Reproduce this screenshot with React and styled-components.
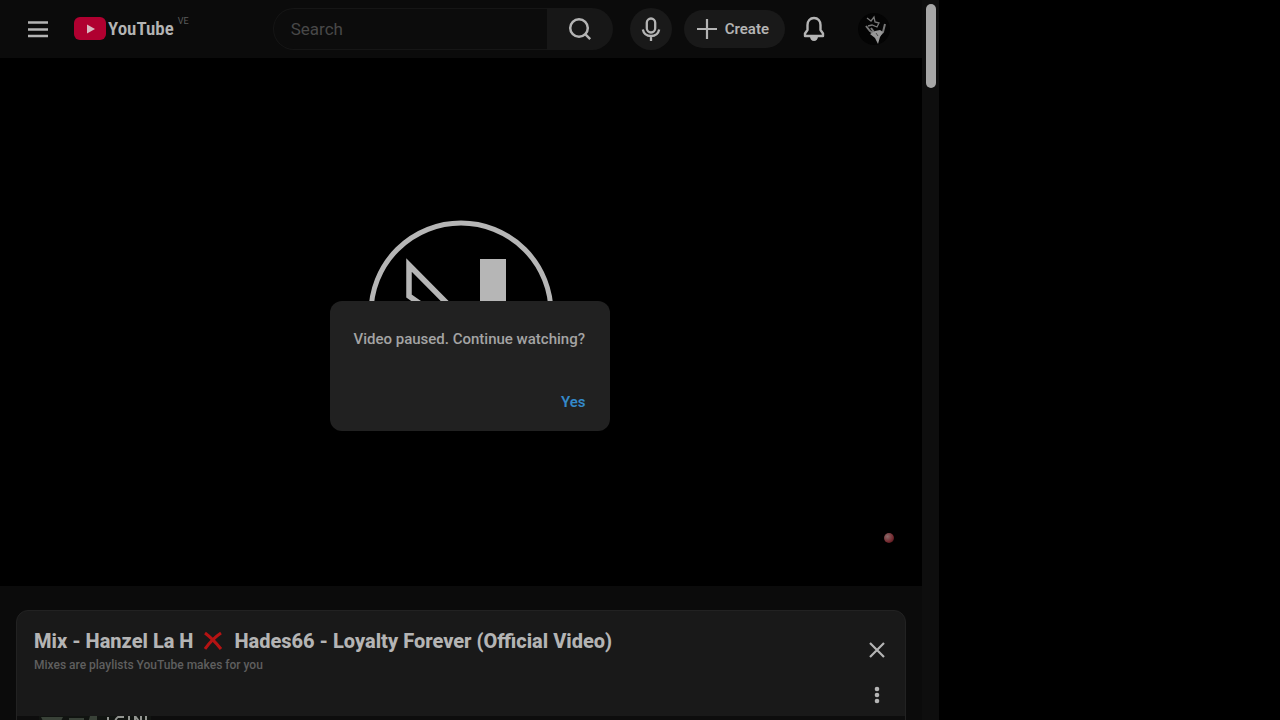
import React, { useState } from "react";
import styled, { createGlobalStyle } from "styled-components";

const GlobalStyle = createGlobalStyle`
  * {
    box-sizing: border-box;
  }

  body {
    margin: 0;
    background: #000;
    color: #b4b4b4;
    font-family: Roboto, "Liberation Sans", sans-serif;
  }

  button, input {
    font: inherit;
    color: inherit;
  }
`;

const Layout = styled.div`
  display: grid;
  grid-template-columns: minmax(0, 1fr) 341px;
  height: 100vh;
  overflow: hidden;
`;

const Browser = styled.div`
  position: relative;
  display: flex;
  min-width: 0;
  height: 100vh;
  background: #0b0b0b;
`;

const Page = styled.div`
  flex: 1;
  min-width: 0;
  height: 100vh;
  overflow: hidden;
`;

const ScrollTrack = styled.div`
  width: 17px;
  padding: 4px;
  background: #0e0e0e;
`;

const ScrollThumb = styled.div`
  width: 10px;
  height: 84px;
  border-radius: 5px;
  background: #a6a6a6;
`;

const Header = styled.header`
  display: flex;
  align-items: center;
  height: 58px;
  padding: 0 32px 0 18px;
`;

const IconButton = styled.button`
  display: flex;
  align-items: center;
  justify-content: center;
  flex: none;
  width: ${props => props.$size || 40}px;
  height: ${props => props.$size || 40}px;
  padding: 0;
  border: none;
  border-radius: 50%;
  background: ${props => (props.$filled ? "#191919" : "transparent")};
  cursor: pointer;
`;

const Logo = styled.a`
  display: flex;
  align-items: center;
  gap: 2px;
  margin-left: 16px;
  color: #b4b4b4;
  text-decoration: none;
`;

const LogoText = styled.span`
  font-family: "Roboto Condensed", "Open Sans Condensed", Roboto, sans-serif;
  font-size: 19px;
  font-weight: 600;
  line-height: 26px;
`;

const Country = styled.span`
  align-self: flex-start;
  margin-left: 2px;
  font-size: 9px;
  line-height: 10px;
  color: #5c5c5c;
`;

const SearchForm = styled.form`
  display: flex;
  flex: 1;
  height: 42px;
  max-width: 340px;
  margin: 0 17px 0 auto;
`;

const SearchInput = styled.input`
  flex: 1;
  min-width: 0;
  padding: 0 17px;
  border: 1px solid #161616;
  border-right: none;
  border-radius: 21px 0 0 21px;
  outline: none;
  background: #0c0c0c;
  font-size: 17px;

  &::placeholder {
    color: #484848;
    opacity: 1;
  }
`;

const SearchButton = styled.button`
  display: flex;
  align-items: center;
  justify-content: center;
  width: 66px;
  padding: 0;
  border: none;
  border-radius: 0 21px 21px 0;
  background: #171717;
  cursor: pointer;
`;

const CreateButton = styled.button`
  display: flex;
  align-items: center;
  gap: 8px;
  height: 38px;
  margin: 0 9px 0 12px;
  padding: 0 16px 0 13px;
  border: none;
  border-radius: 19px;
  background: #191919;
  font-size: 15px;
  font-weight: 600;
  cursor: pointer;
`;

const Avatar = styled.button`
  display: flex;
  flex: none;
  width: 32px;
  height: 32px;
  margin-left: 24px;
  padding: 0;
  border: none;
  border-radius: 50%;
  background: #040404;
  overflow: hidden;
  cursor: pointer;
`;

const Player = styled.section`
  position: relative;
  display: flex;
  justify-content: center;
  height: calc(100vh - 192px);
  padding-top: 162px;
  background: #000;
`;

const Watermark = styled.span`
  position: absolute;
  right: 28px;
  bottom: 43px;
  width: 10px;
  height: 10px;
  border-radius: 50%;
  background: radial-gradient(circle at 35% 35%, #8a6a6a, #74282e 60%, #2a080c);
`;

const Dialog = styled.div`
  position: absolute;
  top: calc(50% + 6px);
  left: 50%;
  display: flex;
  flex-direction: column;
  justify-content: space-between;
  width: 280px;
  height: 130px;
  padding: 28px 24px 19px;
  border-radius: 12px;
  background: #212121;
  transform: translate(-50%, -50%);
`;

const Message = styled.p`
  margin: 0;
  font-size: 15px;
  font-weight: 500;
  line-height: 20px;
  white-space: nowrap;
  color: #a4a4a4;
`;

const ConfirmButton = styled.button`
  align-self: flex-end;
  padding: 0;
  border: none;
  background: none;
  font-size: 15px;
  font-weight: 600;
  line-height: 20px;
  color: #3489c9;
  cursor: pointer;
`;

const Panel = styled.section`
  margin: 24px 16px 0;
  border: 1px solid #222;
  border-radius: 12px;
  background: #191919;
  overflow: hidden;
`;

const PanelHeader = styled.div`
  display: flex;
  justify-content: space-between;
  height: 105px;
  padding: 17px 8px 0 17px;
`;

const PanelTitle = styled.h2`
  display: flex;
  align-items: center;
  gap: 11px;
  margin: 0;
  font-size: 20px;
  font-weight: 800;
  line-height: 26px;
  white-space: nowrap;
`;

const PanelSubtitle = styled.p`
  margin: 3px 0 0;
  font-size: 12px;
  font-weight: 500;
  line-height: 16px;
  color: #5f5f5f;
`;

const PanelActions = styled.div`
  display: flex;
  flex-direction: column;
  gap: 5px;
  padding-top: 2px;
`;

const QueueRow = styled.div`
  height: 64px;
  padding-left: 22px;
  background: #0d0d0d;
`;

const MenuIcon = () => (
  <svg width="20" height="18" viewBox="0 0 20 18" stroke="#b4b4b4" strokeWidth="2.400">
    <path d="M0 2.500h20M0 9.500h20M0 16h20" />
  </svg>
);

const PlayLogo = () => (
  <svg width="32" height="24" viewBox="0 0 32 24">
    <rect x="0" y="0" width="32" height="23" rx="6" fill="#b00030" />
    <path d="M13 7.500v9l8-4.500z" fill="#d8b8bf" />
  </svg>
);

const SearchIcon = () => (
  <svg width="24" height="24" viewBox="0 0 24 24" fill="none" stroke="#b4b4b4" strokeWidth="2.500">
    <circle cx="11" cy="11" r="8.800" />
    <path d="M17.200 17.200l5 5" />
  </svg>
);

const MicIcon = () => (
  <svg width="20" height="24" viewBox="0 0 20 24" fill="none" stroke="#b4b4b4" strokeWidth="2.300">
    <rect x="5.800" y="1.500" width="8.400" height="14" rx="4.200" />
    <path d="M1.800 12.500c1 4.600 4.300 6.500 8.200 6.500s7.200-1.900 8.200-6.500M10 19v5" />
  </svg>
);

const PlusIcon = () => (
  <svg width="20" height="20" viewBox="0 0 20 20" stroke="#b4b4b4" strokeWidth="2.200">
    <path d="M10 0v20M0 10h20" />
  </svg>
);

const BellIcon = () => (
  <svg width="22" height="26" viewBox="0 0 22 26">
    <path
      d="M11 2c-4 0-6.500 3-6.500 7v5L2 17.500V20h18v-2.500L17.500 14V9c0-4-2.500-7-6.500-7z"
      fill="none"
      stroke="#b4b4b4"
      strokeWidth="2.400"
      strokeLinejoin="round"
    />
    <path d="M7 20.500h8c0 2.500-1.700 4.500-4 4.500s-4-2-4-4.500z" fill="#b4b4b4" />
  </svg>
);

const AvatarArt = () => (
  <svg width="32" height="32" viewBox="0 0 32 32" fill="none" stroke="#777">
    <path d="M9 5l4 3 3-4 1 5 4 1-2 4-5-2-4 1" strokeWidth="1.300" />
    <path d="M8 13l4 5 6 4M13 15l3 4M27 11l-2 8-5 5" strokeWidth="2" />
    <path d="M17 18l5-1 3 2-3 5-2 7-3-6-5-4z" fill="#989898" stroke="none" />
    <path d="M18 20l2 3" stroke="#484848" />
  </svg>
);

const VideoLogo = () => (
  <svg width="186" height="186" viewBox="0 0 186 186" fill="none" stroke="#b6b6b6">
    <circle cx="93" cy="93" r="90" strokeWidth="5" />
    <path d="M41 45v31l100 70L41 45z" strokeWidth="5.500" />
    <path d="M112 39h26v108l-26-24z" fill="#b6b6b6" stroke="none" />
  </svg>
);

const CrossMark = () => (
  <svg width="19" height="20" viewBox="0 0 19 20" stroke="#b51313" strokeWidth="3">
    <path d="M1 2q8 6 16 16M17 2q-9 6-16 16" fill="none" />
  </svg>
);

const CloseIcon = () => (
  <svg width="16" height="16" viewBox="0 0 16 16" stroke="#b4b4b4" strokeWidth="2.200">
    <path d="M1 1l14 14M15 1L1 15" />
  </svg>
);

const DotsIcon = () => (
  <svg width="6" height="18" viewBox="0 0 6 18" fill="#b4b4b4">
    <circle cx="3" cy="3" r="2.300" />
    <circle cx="3" cy="9" r="2.300" />
    <circle cx="3" cy="15" r="2.300" />
  </svg>
);

const QueueThumb = () => (
  <svg width="112" height="62" viewBox="0 0 112 62">
    <rect width="112" height="62" fill="#111411" />
    <path d="M2 1h22l-3 6H5zM30 2h15v5H30zM51 0h7v7h-9z" fill="#394238" />
    <path d="M69 1v7M85 1h-6q-3 2-3 6M90 0v8M96 8V0l6 8V0M107 0v8" fill="none" stroke="#929490" strokeWidth="2" />
  </svg>
);

const App = () => {
  const [paused, setPaused] = useState(true);
  const [query, setQuery] = useState("");

  return (
    <Layout>
      <GlobalStyle />
      <Browser>
        <Page>
          <Header>
            <IconButton aria-label="Guide">
              <MenuIcon />
            </IconButton>
            <Logo href="#" aria-label="YouTube Home">
              <PlayLogo />
              <LogoText>YouTube</LogoText>
              <Country>VE</Country>
            </Logo>
            <SearchForm onSubmit={e => e.preventDefault()}>
              <SearchInput
                aria-label="Search"
                placeholder="Search"
                value={query}
                onChange={e => setQuery(e.target.value)}
              />
              <SearchButton aria-label="Submit search">
                <SearchIcon />
              </SearchButton>
            </SearchForm>
            <IconButton $filled $size={42} aria-label="Search with your voice">
              <MicIcon />
            </IconButton>
            <CreateButton>
              <PlusIcon />
              Create
            </CreateButton>
            <IconButton aria-label="Notifications">
              <BellIcon />
            </IconButton>
            <Avatar aria-label="Account menu">
              <AvatarArt />
            </Avatar>
          </Header>
          <Player>
            <VideoLogo />
            <Watermark />
          </Player>
          <Panel>
            <PanelHeader>
              <div>
                <PanelTitle>
                  <span>Mix - Hanzel La H</span>
                  <CrossMark />
                  <span>Hades66 - Loyalty Forever (Official Video)</span>
                </PanelTitle>
                <PanelSubtitle>Mixes are playlists YouTube makes for you</PanelSubtitle>
              </div>
              <PanelActions>
                <IconButton aria-label="Close playlist">
                  <CloseIcon />
                </IconButton>
                <IconButton aria-label="More actions">
                  <DotsIcon />
                </IconButton>
              </PanelActions>
            </PanelHeader>
            <QueueRow>
              <QueueThumb />
            </QueueRow>
          </Panel>
        </Page>
        <ScrollTrack>
          <ScrollThumb />
        </ScrollTrack>
        {paused && (
          <Dialog role="dialog" aria-label="Video paused">
            <Message>Video paused. Continue watching?</Message>
            <ConfirmButton onClick={() => setPaused(false)}>Yes</ConfirmButton>
          </Dialog>
        )}
      </Browser>
    </Layout>
  );
};

export default App;
